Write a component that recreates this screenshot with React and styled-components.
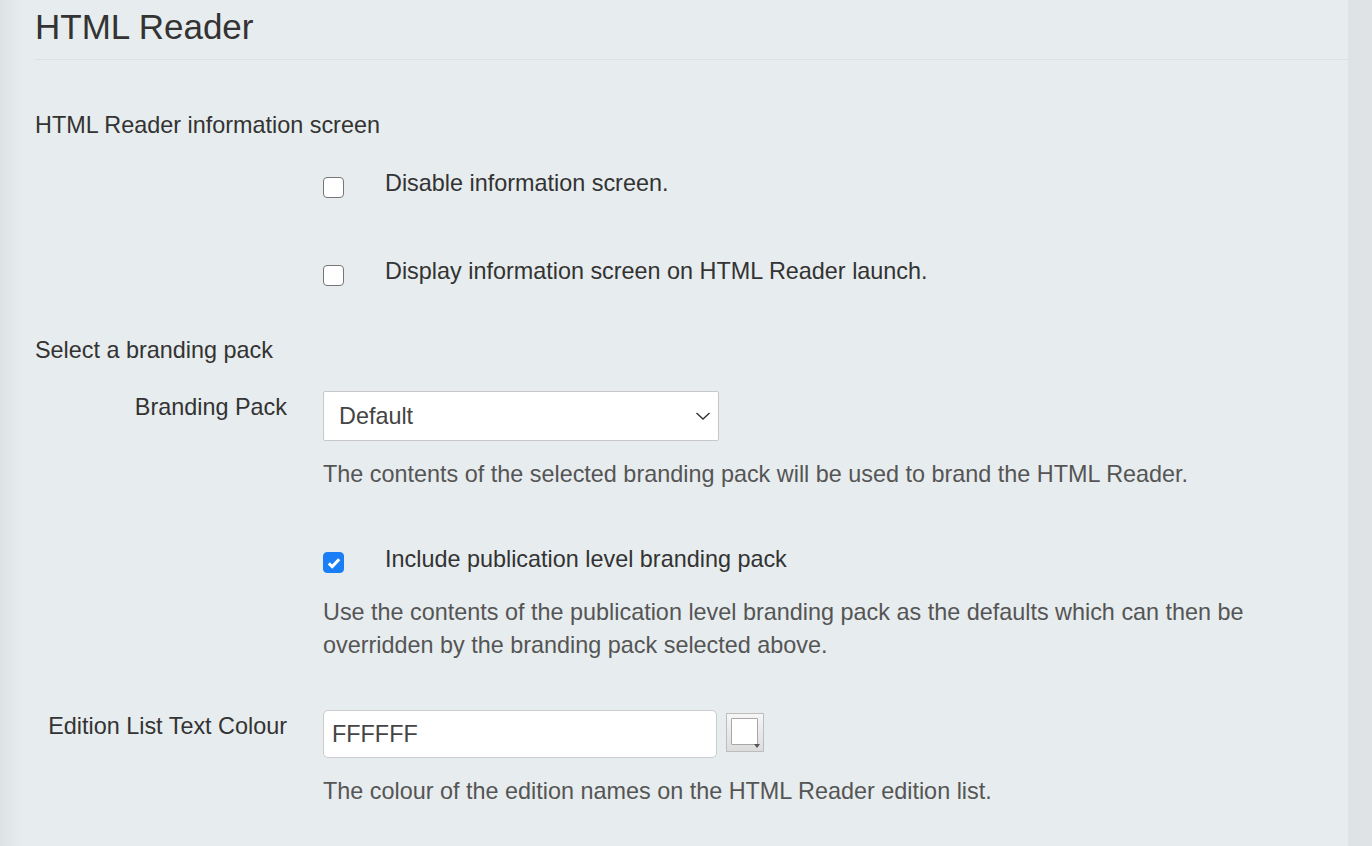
import styled, { createGlobalStyle } from 'styled-components'

const GlobalStyle = createGlobalStyle`
  html, body {
    margin: 0;
    padding: 0;
    background: #dfe3e5;
    font-family: "Liberation Sans", Arial, sans-serif;
  }
  * { box-sizing: border-box; }
`

const Page = styled.div`
  display: flex;
  min-height: 100vh;
`

const Panel = styled.main`
  width: 1348px;
  min-height: 846px;
  padding: 7px 0 0 35px;
  background: linear-gradient(90deg, #dde2e4 0px, #e7ecee 22px, #e7ecee 100%);
`

const Header = styled.header`
  padding-bottom: 12px;
  border-bottom: 1px solid #dce1e3;
`

const Title = styled.h1`
  margin: 0;
  font-size: 35px;
  line-height: 40px;
  font-weight: 400;
  color: #333;
`

const SectionTitle = styled.h2`
  margin: ${p => p.$top}px 0 0;
  font-size: 23.4px;
  line-height: 33px;
  font-weight: 400;
  color: #333;
`

const Row = styled.div`
  display: grid;
  grid-template-columns: 252px 1fr;
  column-gap: 36px;
  margin-top: ${p => p.$top}px;
`

const Label = styled.label`
  text-align: right;
  font-size: 23.4px;
  line-height: 33px;
  color: #333;
  padding-top: ${p => p.$pad || 0}px;
`

const Control = styled.div`
  display: flex;
  flex-direction: column;
`

const CheckLine = styled.label`
  display: flex;
  align-items: flex-start;
  gap: 41px;
  font-size: 23.4px;
  line-height: 33px;
  color: #333;
`

const Box = styled.span`
  flex: none;
  width: 21px;
  height: 21px;
  margin-top: ${p => (p.$checked ? 9 : 10)}px;
  border-radius: 4px;
  border: 1.5px solid ${p => (p.$checked ? '#1a7ff6' : '#767676')};
  background: ${p => (p.$checked ? '#1a7ff6' : '#fff')};
  display: flex;
  align-items: center;
  justify-content: center;
`

const Help = styled.p`
  margin: ${p => p.$top}px 0 0;
  font-size: 23.4px;
  line-height: 33px;
  color: #555;
  max-width: 960px;
`

const Select = styled.div`
  width: 396px;
  height: 50px;
  background: #fff;
  border: 1px solid #c8c8c8;
  border-radius: 2px;
  display: flex;
  align-items: center;
  justify-content: space-between;
  padding: 0 6px 0 15px;
  font-size: 23.4px;
  color: #444;
`

const InputLine = styled.div`
  display: flex;
  align-items: flex-start;
  gap: 9px;
`

const TextInput = styled.div`
  width: 394px;
  height: 48px;
  background: #fff;
  border: 1px solid #ccc;
  border-radius: 5px;
  display: flex;
  align-items: center;
  padding-left: 8px;
  font-size: 23.4px;
  color: #444;
`

const Swatch = styled.div`
  position: relative;
  width: 38px;
  height: 39px;
  margin-top: 3px;
  border: 1px solid #bdbdbd;
  background: linear-gradient(#f6f6f6, #dcdcdc);
  padding: 4px 5px 6px 4px;
`

const SwatchColor = styled.div`
  width: 100%;
  height: 100%;
  background: #fff;
  border: 1px solid #a8a8a8;
  border-radius: 1px;
`

const SwatchArrow = styled.span`
  position: absolute;
  right: 3px;
  bottom: 3px;
  width: 0;
  height: 0;
  border-left: 3px solid transparent;
  border-right: 3px solid transparent;
  border-top: 4px solid #555;
`

const Check = ({ checked }) => (
  <Box $checked={checked}>
    {checked && (
      <svg width="14" height="12" viewBox="0 0 14 12">
        <polyline points="1.8,6.4 5.2,9.6 12.2,2.2" fill="none" stroke="#fff" strokeWidth="3" />
      </svg>
    )}
  </Box>
)

export default function App() {
  return (
    <>
      <GlobalStyle />
      <Page>
        <Panel>
          <Header>
            <Title>HTML Reader</Title>
          </Header>

          <SectionTitle $top={49}>HTML Reader information screen</SectionTitle>
          <Row $top={25}>
            <span />
            <CheckLine><Check />Disable information screen.</CheckLine>
          </Row>
          <Row $top={55}>
            <span />
            <CheckLine><Check />Display information screen on HTML Reader launch.</CheckLine>
          </Row>

          <SectionTitle $top={46}>Select a branding pack</SectionTitle>
          <Row $top={24}>
            <Label>Branding Pack</Label>
            <Control>
              <Select>
                Default
                <svg width="18" height="12" viewBox="0 0 18 12">
                  <polyline points="2.5,3 9,9 15.5,3" fill="none" stroke="#333" strokeWidth="1.4" />
                </svg>
              </Select>
              <Help $top={17}>The contents of the selected branding pack will be used to brand the HTML Reader.</Help>
            </Control>
          </Row>
          <Row $top={52}>
            <span />
            <Control>
              <CheckLine><Check checked />Include publication level branding pack</CheckLine>
              <Help $top={20}>Use the contents of the publication level branding pack as the defaults which can then be overridden by the branding pack selected above.</Help>
            </Control>
          </Row>

          <Row $top={48}>
            <Label>Edition List Text Colour</Label>
            <Control>
              <InputLine>
                <TextInput>FFFFFF</TextInput>
                <Swatch>
                  <SwatchColor />
                  <SwatchArrow />
                </Swatch>
              </InputLine>
              <Help $top={17}>The colour of the edition names on the HTML Reader edition list.</Help>
            </Control>
          </Row>
        </Panel>
      </Page>
    </>
  )
}
